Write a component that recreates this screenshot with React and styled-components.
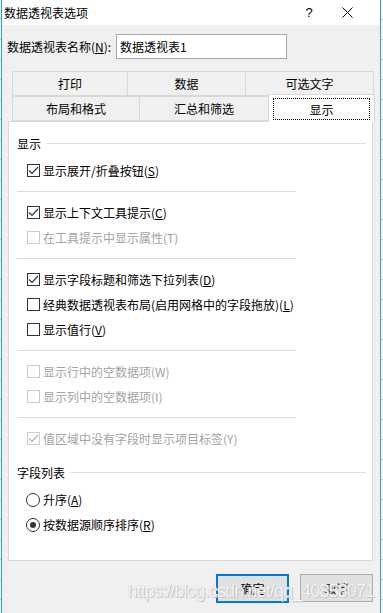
import React from "react";
import styled, { createGlobalStyle } from "styled-components";

const GlobalStyle = createGlobalStyle`
  html, body {
    margin: 0;
    padding: 0;
    background: #ffffff;
  }
  * {
    box-sizing: border-box;
  }
`;

const FONT = `"Noto Sans CJK SC", "Microsoft YaHei", "Liberation Sans", sans-serif`;

const Page = styled.div`
  display: flex;
  width: 383px;
  height: 613px;
  font-family: ${FONT};
  font-size: 12px;
  color: #000;
`;

const SheetEdge = styled.div`
  width: ${(p) => p.w}px;
  flex-shrink: 0;
  background-color: #f3f3f3;
  background-image: repeating-linear-gradient(
    to bottom,
    transparent 0,
    transparent 19px,
    #c8c8c8 19px,
    #c8c8c8 20px
  );
`;

const Window = styled.div`
  position: relative;
  width: 380px;
  display: flex;
  flex-direction: column;
  border-left: 1px solid #2aa8b8;
  border-right: 1px solid #2aa8b8;
  background: #f0f0f0;
`;

const TitleBar = styled.div`
  height: 25px;
  background: #fff;
  display: flex;
  align-items: center;
  padding-left: 2px;
`;

const Title = styled.div`
  flex: 1;
  line-height: 16px;
`;

const TitleButton = styled.div`
  width: ${(p) => p.w}px;
  display: flex;
  justify-content: center;
  align-items: center;
  font-family: "Liberation Sans", sans-serif;
  font-size: 13px;
`;

const NameRow = styled.div`
  display: flex;
  align-items: center;
  margin-top: 9px;
  padding-left: 5px;
  height: 25px;
`;

const NameLabel = styled.label`
  width: 109px;
  white-space: nowrap;
`;

const NameInput = styled.div`
  width: 171px;
  height: 25px;
  background: #fff;
  border: 1px solid #a8a8a8;
  padding-left: 3px;
  display: flex;
  align-items: center;
`;

const Tabs = styled.div`
  margin: 12px 0 0 8px;
  display: flex;
  flex-direction: column;
`;

const TabRow = styled.div`
  display: flex;
  height: 25px;
  align-items: flex-end;
`;

const Tab = styled.div`
  width: ${(p) => p.w}px;
  height: ${(p) => (p.active ? 28 : 25)}px;
  margin-bottom: ${(p) => (p.active ? -1 : 0)}px;
  margin-left: ${(p) => (p.first ? 0 : -1)}px;
  border: 1px solid #d9d9d9;
  border-bottom: ${(p) => (p.active ? "none" : "1px solid #d9d9d9")};
  background: ${(p) => (p.active ? "#fff" : "#f0f0f0")};
  display: flex;
  align-items: center;
  justify-content: center;
  z-index: ${(p) => (p.active ? 2 : 1)};
  padding: ${(p) => (p.active ? "3px 4px 2px" : "0")};
`;

const FocusBox = styled.div`
  flex: 1;
  align-self: stretch;
  border: 1px dotted #000;
  display: flex;
  align-items: center;
  justify-content: center;
`;

const Panel = styled.div`
  margin: 0 7px 0 6px;
  height: 440px;
  background: #fff;
  border: 1px solid #d9d9d9;
  padding: 11px 6px 0 8px;
  display: flex;
  flex-direction: column;
`;

const GroupHeader = styled.div`
  display: flex;
  align-items: center;
  height: 20px;
  gap: 6px;
  margin-top: ${(p) => p.top || 0}px;
  &::after {
    content: "";
    flex: 1;
    height: 1px;
    background: #dcdcdc;
  }
`;

const Options = styled.div`
  margin-top: 5px;
  padding-left: 10px;
  display: flex;
  flex-direction: column;
`;

const Row = styled.div`
  height: 25px;
  display: flex;
  align-items: center;
  gap: 3px;
  color: ${(p) => (p.disabled ? "#a3a3a3" : "#000")};
  white-space: nowrap;
`;

const Box = styled.span`
  width: 13px;
  height: 13px;
  border: 1px solid ${(p) => (p.disabled ? "#cccccc" : "#333")};
  display: flex;
  align-items: center;
  justify-content: center;
  flex-shrink: 0;
`;

const Radio = styled.span`
  width: 14px;
  height: 14px;
  border-radius: 50%;
  border: 1px solid #333;
  margin-left: -1px;
  display: flex;
  align-items: center;
  justify-content: center;
  flex-shrink: 0;
  &::after {
    content: "";
    width: 6px;
    height: 6px;
    border-radius: 50%;
    background: ${(p) => (p.checked ? "#333" : "transparent")};
  }
`;

const Separator = styled.div`
  width: 279px;
  height: 1px;
  background: #dcdcdc;
  margin: 8px 0 8px -10px;
`;

const Footer = styled.div`
  display: flex;
  justify-content: flex-end;
  gap: 11px;
  margin: 13px 7px 0 0;
`;

const Button = styled.div`
  width: 73px;
  height: ${(p) => (p.primary ? 29 : 28)}px;
  background: #e1e1e1;
  border: ${(p) => (p.primary ? "2px solid #0078d7" : "1px solid #adadad")};
  display: flex;
  align-items: center;
  justify-content: center;
`;

const Watermark = styled.div`
  position: absolute;
  right: 6px;
  bottom: 11px;
  font-family: "Liberation Sans", sans-serif;
  font-size: 18px;
  letter-spacing: -0.9px;
  color: rgba(255, 255, 255, 0.85);
  text-shadow: 0 0 1px #b8b8b8, 1px 1px 0 #c8c8c8;
  white-space: nowrap;
`;

function Check({ disabled }) {
  return (
    <svg width="11" height="11" viewBox="0 0 11 11">
      <path
        d="M1 5.5 L4 8.5 L10 2"
        fill="none"
        stroke={disabled ? "#b0b0b0" : "#333"}
        strokeWidth="1.2"
      />
    </svg>
  );
}

function CheckRow({ checked, disabled, children }) {
  return (
    <Row disabled={disabled}>
      <Box disabled={disabled}>{checked && <Check disabled={disabled} />}</Box>
      <span>{children}</span>
    </Row>
  );
}

function RadioRow({ checked, children }) {
  return (
    <Row>
      <Radio checked={checked} />
      <span>{children}</span>
    </Row>
  );
}

export default function App() {
  return (
    <Page>
      <GlobalStyle />
      <SheetEdge w={1} />
      <Window>
        <TitleBar>
          <Title>数据透视表选项</Title>
          <TitleButton w={30}>?</TitleButton>
          <TitleButton w={46}>
            <svg width="11" height="11" viewBox="0 0 11 11">
              <path d="M0.5 0.5 L10.5 10.5 M10.5 0.5 L0.5 10.5" stroke="#000" strokeWidth="1" />
            </svg>
          </TitleButton>
          <div style={{ width: 10 }} />
        </TitleBar>

        <NameRow>
          <NameLabel>
            数据透视表名称(<u>N</u>):
          </NameLabel>
          <NameInput>数据透视表1</NameInput>
        </NameRow>

        <Tabs>
          <TabRow style={{ paddingLeft: 2 }}>
            <Tab w={116} first>打印</Tab>
            <Tab w={119}>数据</Tab>
            <Tab w={129}>可选文字</Tab>
          </TabRow>
          <TabRow style={{ paddingLeft: 2 }}>
            <Tab w={128} first>布局和格式</Tab>
            <Tab w={130}>汇总和筛选</Tab>
            <Tab w={107} active>
              <FocusBox>显示</FocusBox>
            </Tab>
          </TabRow>
        </Tabs>

        <Panel>
          <GroupHeader>显示</GroupHeader>
          <Options>
            <CheckRow checked>
              显示展开/折叠按钮(<u>S</u>)
            </CheckRow>
            <Separator />
            <CheckRow checked>
              显示上下文工具提示(<u>C</u>)
            </CheckRow>
            <CheckRow disabled>在工具提示中显示属性(T)</CheckRow>
            <Separator />
            <CheckRow checked>
              显示字段标题和筛选下拉列表(<u>D</u>)
            </CheckRow>
            <CheckRow>
              经典数据透视表布局(启用网格中的字段拖放)(<u>L</u>)
            </CheckRow>
            <CheckRow>
              显示值行(<u>V</u>)
            </CheckRow>
            <Separator />
            <CheckRow disabled>显示行中的空数据项(W)</CheckRow>
            <CheckRow disabled>显示列中的空数据项(I)</CheckRow>
            <Separator />
            <CheckRow checked disabled>
              值区域中没有字段时显示项目标签(Y)
            </CheckRow>
          </Options>
          <GroupHeader top={11}>字段列表</GroupHeader>
          <Options>
            <RadioRow>
              升序(<u>A</u>)
            </RadioRow>
            <RadioRow checked>
              按数据源顺序排序(<u>R</u>)
            </RadioRow>
          </Options>
        </Panel>

        <Footer>
          <Button primary>确定</Button>
          <Button>取消</Button>
        </Footer>

        <Watermark>https://blog.csdn.net/qq_40858071</Watermark>
      </Window>
      <SheetEdge w={2} />
    </Page>
  );
}
